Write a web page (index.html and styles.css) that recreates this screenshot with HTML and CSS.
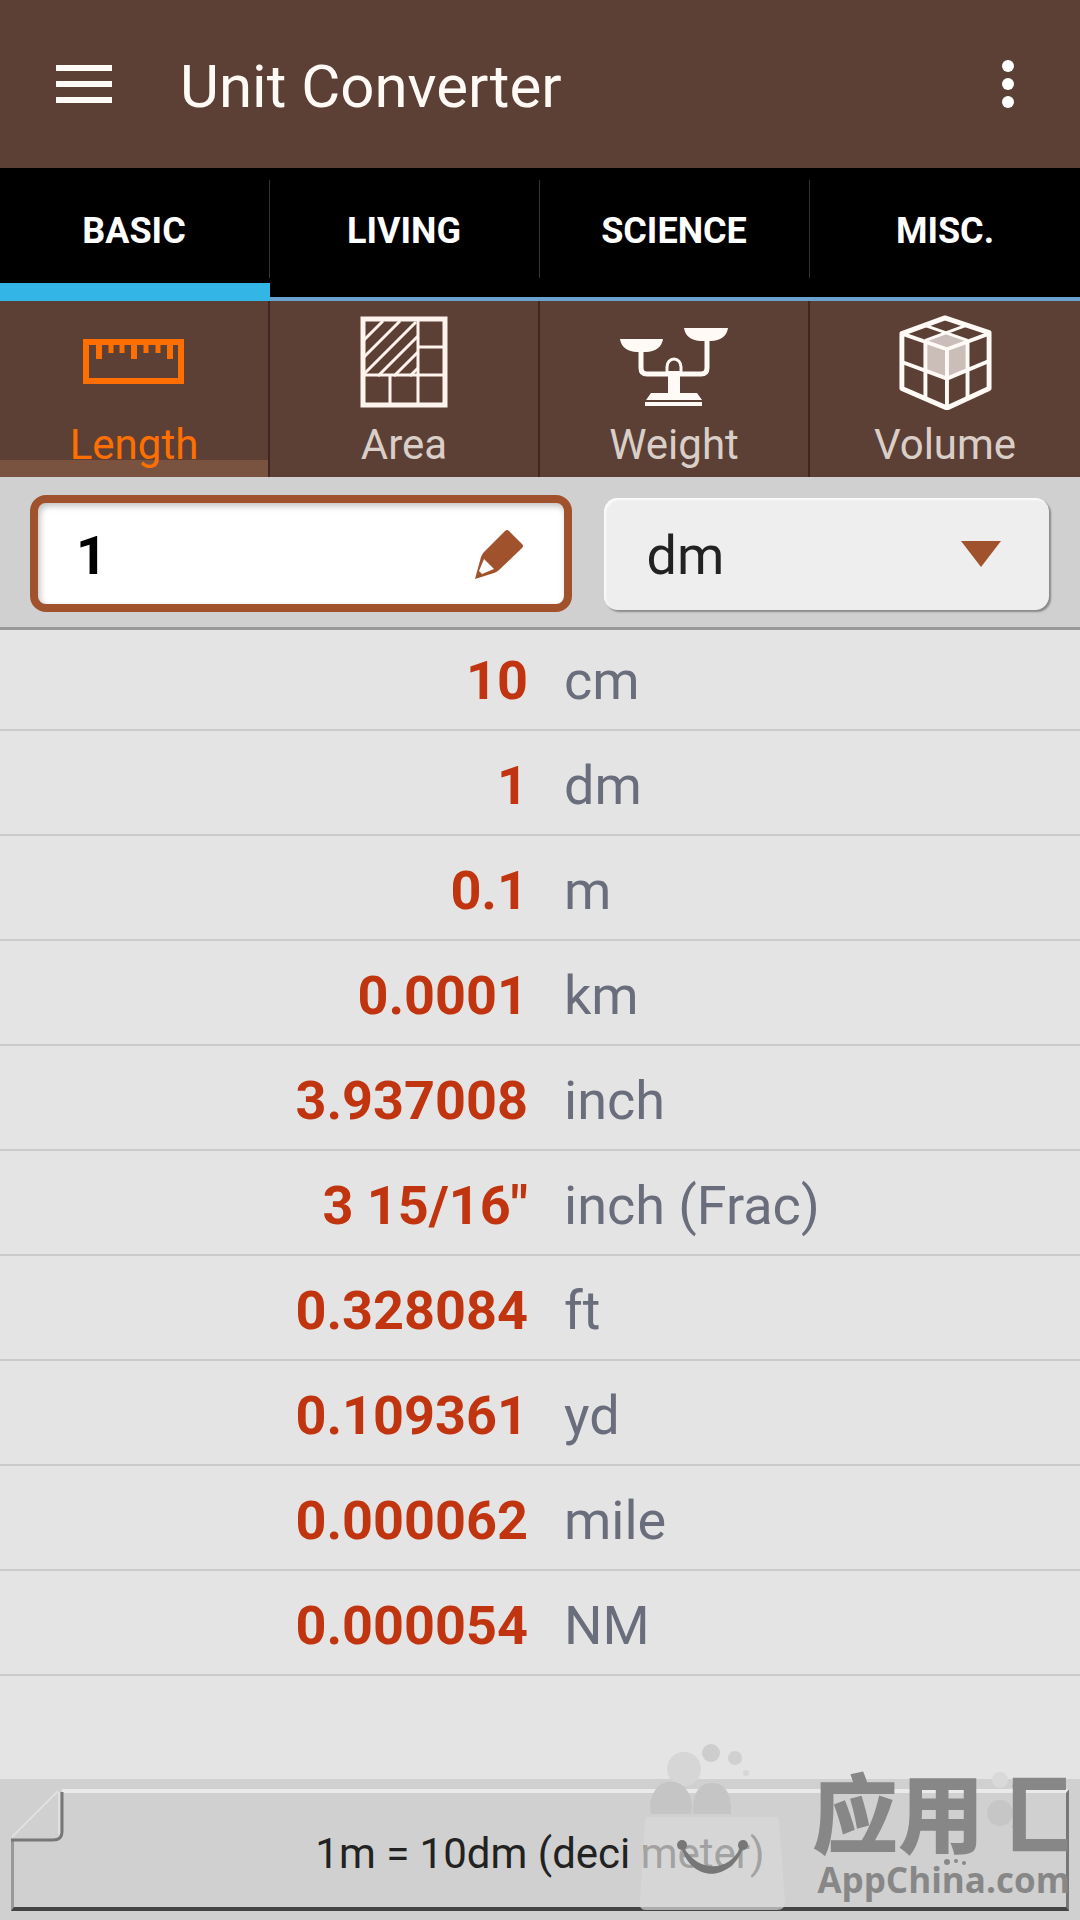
FILE: index.html
```html
<!DOCTYPE html>
<html lang="en">
<head>
<meta charset="utf-8">
<meta name="viewport" content="width=device-width, initial-scale=1">
<title>Unit Converter</title>
<link rel="stylesheet" href="styles.css">
</head>
<body>
<header class="app-bar">
  <button class="icon-button" type="button" aria-label="Menu">
    <svg width="56" height="38" viewBox="0 0 56 38" fill="#fffaf6"><path d="M0 0h56v6H0zM0 16h56v6H0zM0 32h56v6H0z"/></svg>
  </button>
  <h1 class="app-title">Unit Converter</h1>
  <button class="icon-button" type="button" aria-label="More options">
    <svg width="12" height="48" viewBox="0 0 12 48" fill="#fff"><circle cx="6" cy="6" r="6"/><circle cx="6" cy="24" r="6"/><circle cx="6" cy="42" r="6"/></svg>
  </button>
</header>

<nav class="tabs" aria-label="Groups">
  <button class="tab tab-active" type="button">BASIC</button>
  <button class="tab" type="button">LIVING</button>
  <button class="tab" type="button">SCIENCE</button>
  <button class="tab" type="button">MISC.</button>
</nav>

<nav class="categories" aria-label="Quantities">
  <button class="category category-active" type="button">
    <svg class="category-icon" width="102" height="96" viewBox="0 0 102 96" fill="none" stroke="currentColor">
      <path stroke-width="6" d="M3 28h95v39H3z"/>
      <path stroke-width="6" d="M16 29v16M51 29v16M87 29v16"/>
      <path stroke-width="5" d="M28 29v10M39 29v10M63 29v10M75 29v10"/>
    </svg>
    <span>Length</span>
  </button>
  <button class="category" type="button">
    <svg class="category-icon" width="88" height="96" viewBox="0 0 88 96" fill="none" stroke="#fff3ee">
      <path stroke-width="5" d="M3 5h82v86H3z"/>
      <path stroke-width="3" d="M58 6v85M3 61h82M58 33h27M30 62v29"/>
      <path stroke-width="3" d="M4 26L23 7M4 43L40 7M4 60L56 8M18 62L58 22M34 62L58 38M50 62L58 54"/>
    </svg>
    <span>Area</span>
  </button>
  <button class="category" type="button">
    <svg class="category-icon" width="110" height="96" viewBox="0 0 110 96" fill="#fffaf6">
      <path d="M1 25h43c-1 8-8 13-17 13H18C9 38 2 33 1 25zM65 14h44c-1 8-8 13-17 13H82c-9 0-16-5-17-13z"/>
      <path fill="none" stroke="#fffaf6" stroke-width="5" d="M22 36v18c0 4 2 6 6 6h54c4 0 6-2 6-6V24"/>
      <path d="M49 60h12v20H49z"/>
      <path fill="#5c4036" stroke="#fffaf6" stroke-width="3" d="M48 59v-6a7 8 0 0 1 14 0v6z"/>
      <path d="M49 57h12v23H49z"/>
      <path d="M32 79h46l5 7H27zM26 88h57v4H26z"/>
    </svg>
    <span>Weight</span>
  </button>
  <button class="category" type="button">
    <svg class="category-icon" width="96" height="96" viewBox="0 0 96 98" fill="none" stroke="#fffaf6">
      <path fill="#cbbdb8" stroke="none" d="M28 27l21-9 22 9v31l-22 8-21-8z"/>
      <path stroke-width="5" stroke-linejoin="round" d="M48 4l45 15v57L50 96 4 76V20z"/>
      <path stroke-width="4" d="M4 20l46 16 43-16M50 34v62M28 26v60M71 26v60M4 49l46 17 43-18"/>
      <path stroke-width="3" d="M26 11l45 16M71 11L28 27"/>
    </svg>
    <span>Volume</span>
  </button>
</nav>

<form class="entry">
  <div class="value-field">
    <input class="value-input" type="text" inputmode="decimal" aria-label="Value" value="1">
    <svg class="field-icon" width="50" height="50" viewBox="0 0 50 50"><path fill="#a0522d" d="M31 2q2-2 4 0l13 13q2 2 0 4L25 41q-2 2-5 3L1 50 7 28q1-3 3-5z"/><path fill="#fff" d="M10 30l10 10-12 5-3-3z"/></svg>
  </div>
  <div class="unit-field">
    <select class="unit-select" aria-label="Unit"><option>dm</option></select>
    <svg class="field-icon" width="40" height="26" viewBox="0 0 40 26"><path fill="#a0522d" d="M0 0h40L20 26z"/></svg>
  </div>
</form>

<main class="results">
  <table class="result-table">
    <tbody>
      <tr><td class="amount">10</td><th class="unit" scope="row">cm</th></tr>
      <tr><td class="amount">1</td><th class="unit" scope="row">dm</th></tr>
      <tr><td class="amount">0.1</td><th class="unit" scope="row">m</th></tr>
      <tr><td class="amount">0.0001</td><th class="unit" scope="row">km</th></tr>
      <tr><td class="amount">3.937008</td><th class="unit" scope="row">inch</th></tr>
      <tr><td class="amount">3 15/16"</td><th class="unit" scope="row">inch (Frac)</th></tr>
      <tr><td class="amount">0.328084</td><th class="unit" scope="row">ft</th></tr>
      <tr><td class="amount">0.109361</td><th class="unit" scope="row">yd</th></tr>
      <tr><td class="amount">0.000062</td><th class="unit" scope="row">mile</th></tr>
      <tr><td class="amount">0.000054</td><th class="unit" scope="row">NM</th></tr>
    </tbody>
  </table>
</main>

<footer class="note-bar">
  <p class="note">1m = 10dm (deci meter)</p>
  <svg class="note-fold" width="56" height="56" viewBox="0 0 56 56" fill="none">
    <path fill="#d0d0d0" d="M0 0h52v52H0z"/>
    <path stroke="#e0e0e0" stroke-width="2" d="M2 48L48 2M49 3v42"/>
    <path stroke="#777" stroke-width="3" d="M1 51h42q9 0 9-8V3"/>
  </svg>
  <div class="watermark">
    <svg class="watermark-art" width="480" height="200" viewBox="0 0 480 200">
      <g fill="#d6d6d6"><circle cx="84" cy="49" r="17"/><circle cx="111" cy="33" r="9" fill="#cdcdcd"/><circle cx="135" cy="38" r="7" fill="#d0d0d0"/><circle cx="146" cy="53" r="3"/></g>
      <path fill="#c5c5c5" d="M51 94a21 25 0 1 1 40 0zM93 94q-1-31 19-31t19 31z"/>
      <path fill="#d9d9d9" fill-opacity=".7" d="M48 97h128q2 0 3 3l6 82q0 8-8 8H46q-7 0-6-8l5-80q1-5 3-5z"/>
      <g fill="#777"><circle cx="82" cy="125" r="5"/><circle cx="143" cy="125" r="5"/><path d="M81 126c10 37 50 37 63 0h-3c-11 27-44 27-58 0z"/></g>
      <circle cx="400" cy="60" r="8" fill="#d9d9d9"/><circle cx="400" cy="93" r="13" fill="#c6c6c6"/>
      <g fill="#888"><circle cx="347" cy="142" r="3"/><circle cx="356" cy="141" r="2"/><circle cx="364" cy="143" r="2"/></g>
    </svg>
    <div class="watermark-text">
      <span class="watermark-name">应用<span class="watermark-last">汇</span></span>
      <span class="watermark-site">AppChina.com</span>
    </div>
  </div>
</footer>
</body>
</html>
```
FILE: styles.css
```css
* {
  box-sizing: border-box;
}

body {
  display: flex;
  flex-direction: column;
  min-height: 100vh;
  margin: 0;
  background: #e4e4e4;
  font-family: Roboto, "Noto Sans", sans-serif;
}

button {
  margin: 0;
  border: 0;
  background: none;
  font-family: inherit;
}

svg {
  display: block;
}

/* Title bar */
.app-bar {
  display: flex;
  align-items: center;
  height: 168px;
  padding: 0 34px 0 24px;
  background: #5c4036;
}

.icon-button {
  padding: 24px 32px;
}

.app-title {
  flex: 1;
  margin: 0;
  padding: 6px 0 0 36px;
  color: #fffaf6;
  font-size: 60px;
  font-weight: 400;
  line-height: 72px;
}

/* Group tabs */
.tabs {
  display: grid;
  grid-template-columns: repeat(4, 1fr);
  height: 133px;
  background: #000;
}

.tab {
  padding: 0 2px 3px 0;
  border-bottom: 4px solid #6aa2cf;
  background: linear-gradient(#333, #333) right 0 top 12px / 1px 98px no-repeat;
  color: #fff;
  font-size: 36px;
  font-weight: 700;
}

.tab:last-child {
  padding-right: 0;
  background: none;
}

.tab-active {
  padding-top: 14px;
  border-bottom: 18px solid #33b5e5;
}

/* Quantity buttons */
.categories {
  display: grid;
  grid-template-columns: repeat(4, 1fr);
  height: 176px;
  background: #5c4036;
}

.category {
  display: flex;
  flex-direction: column;
  align-items: center;
  gap: 11px;
  padding: 13px 0 0;
  border-right: 2px solid #402520;
  color: #dacfc8;
  font-size: 42px;
  line-height: 48px;
}

.category:last-child {
  border-right: 0;
}

.category-active {
  background: linear-gradient(#79533f, #79533f) bottom / 100% 17px no-repeat;
  color: #ff6f00;
}

/* Value and unit entry */
.entry {
  display: grid;
  grid-template-columns: 543fr 445fr;
  gap: 32px;
  padding: 18px 31px 15px 30px;
  border-bottom: 3px solid #999;
  background: #d0d0d0;
}

.value-field,
.unit-field {
  display: grid;
  align-items: center;
}

.value-field > *,
.unit-field > * {
  grid-area: 1 / 1;
}

.value-input,
.unit-select {
  width: 100%;
  margin: 0;
  font-family: inherit;
  font-size: 54px;
  outline: none;
}

.value-input {
  height: 117px;
  padding: 4px 100px 0 38px;
  border: 8px solid #a0522d;
  border-radius: 16px;
  background: #fff;
  box-shadow: inset 2px 3px 6px #8888;
  color: #000;
  font-weight: 700;
}

.unit-select {
  height: 112px;
  padding: 4px 100px 0 42px;
  border: 0;
  border-radius: 14px;
  appearance: none;
  background: #eee;
  box-shadow: 2px 2px 2px #888, inset 2px 2px 2px #fafafa;
  color: #222;
}

.field-icon {
  justify-self: end;
  margin-right: 48px;
  pointer-events: none;
}

/* Converted amounts */
.results {
  flex: 1;
}

.result-table {
  width: 100%;
  border-collapse: collapse;
  table-layout: fixed;
  font-size: 54px;
  line-height: 64px;
}

.result-table td,
.result-table th {
  height: 105px;
  padding: 12px 0 6px;
  border-bottom: 2px solid #cacaca;
  font-weight: 400;
  vertical-align: middle;
}

.result-table tr:first-child > * {
  height: 100px;
  padding-top: 9px;
}

.result-table .amount {
  padding-right: 12px;
  color: #c0350f;
  font-weight: 700;
  text-align: right;
}

.result-table .unit {
  padding-left: 24px;
  color: #6a6e7c;
  text-align: left;
}

/* Note and watermark */
.note-bar {
  position: relative;
  padding: 10px 11px 9px;
  background: #d0d0d0;
}

.note {
  margin: 0;
  padding: 37px 0 29px;
  border: solid;
  border-width: 4px 3px;
  border-color: #eaeaea #777 #444 #999;
  color: #222;
  font-size: 42px;
  line-height: 48px;
  text-align: center;
}

.note-fold {
  position: absolute;
  top: 10px;
  left: 10px;
}

.watermark {
  position: absolute;
  right: 0;
  bottom: 0;
  display: grid;
  pointer-events: none;
}

.watermark > * {
  grid-area: 1 / 1;
}

.watermark-text {
  display: flex;
  flex-direction: column;
  align-items: flex-end;
  padding: 46px 10px 0 0;
  color: #878787;
  white-space: nowrap;
}

.watermark-name {
  font-family: "Noto Sans CJK SC", sans-serif;
  font-size: 86px;
  font-weight: 900;
  line-height: 88px;
}

.watermark-last {
  background: linear-gradient(90deg, transparent 32%, #878787 32%);
  background-clip: text;
  color: transparent;
}

.watermark-site {
  font-family: "Open Sans", sans-serif;
  font-size: 35px;
  font-weight: 700;
  line-height: 52px;
}
```
